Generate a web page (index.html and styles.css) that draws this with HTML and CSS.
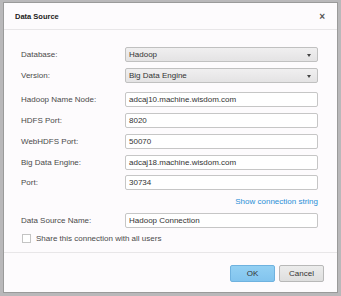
FILE: index.html
```html
<!DOCTYPE html>
<html>
<head>
    <title>Data Source</title>
    <meta charset="utf-8">
    <link rel="stylesheet" href="styles.css">
</head>
<body>
    <div class="dialog">
        <div class="header">
            <div class="title">Data Source</div>
            <div class="close">&#215;</div>
        </div>
        <div class="body">
            <div class="form">
                <label class="label">Database:</label>
                <div class="select">Hadoop<span class="arrow"></span></div>
                <label class="label">Version:</label>
                <div class="select">Big Data Engine<span class="arrow"></span></div>
            </div>
            <div class="form fields">
                <label class="label">Hadoop Name Node:</label>
                <div class="input">adcaj10.machine.wisdom.com</div>
                <label class="label">HDFS Port:</label>
                <div class="input">8020</div>
                <label class="label">WebHDFS Port:</label>
                <div class="input">50070</div>
                <label class="label">Big Data Engine:</label>
                <div class="input">adcaj18.machine.wisdom.com</div>
                <label class="label">Port:</label>
                <div class="input">30734</div>
            </div>
            <div class="link-row"><a class="link">Show connection string</a></div>
            <div class="form">
                <label class="label">Data Source Name:</label>
                <div class="input">Hadoop Connection</div>
            </div>
            <div class="check-row">
                <span class="checkbox"></span>
                <span>Share this connection with all users</span>
            </div>
        </div>
        <div class="footer">
            <button class="btn btn-ok">OK</button>
            <button class="btn">Cancel</button>
        </div>
    </div>
</body>
</html>
```

FILE: styles.css
```css
body {
    margin: 0;
    background-color: #b9b8ba;
    font-family: "Liberation Sans", Arial, sans-serif;
    font-size: 8px;
    color: #333;
}

.dialog {
    margin: 2px 0 0 3px;
    width: 333px;
    height: 289px;
    background-color: #fdfbfd;
    border: 1px solid #9a9a9a;
    display: flex;
    flex-direction: column;
}

.header {
    height: 26px;
    border-bottom: 1px solid #e8e6e8;
    display: flex;
    align-items: center;
    justify-content: space-between;
    padding: 0 12px 0 11px;
}
.title {
    font-weight: bold;
    font-size: 7.5px;
    color: #222;
}
.close {
    font-size: 10px;
    color: #555;
    font-weight: bold;
}

.body {
    flex: 1;
    padding: 17px 19px 0 17px;
}

.form {
    display: grid;
    grid-template-columns: 104px 193px;
    grid-auto-rows: 15px;
    row-gap: 5.75px;
    align-items: center;
}
.fields {
    margin-top: 9.5px;
}

.label {
    color: #4a4a4a;
}

.select, .input {
    box-sizing: border-box;
    height: 15px;
    border: 1px solid #c6c6c6;
    border-radius: 2px;
    padding: 0 3px;
    line-height: 13px;
    color: #333;
    background-color: #fff;
}
.select {
    position: relative;
    background: linear-gradient(#f0eff0, #e4e3e4);
    border-color: #c0c0c0;
}
.arrow {
    position: absolute;
    right: 6px;
    top: 6px;
    border-left: 2.5px solid transparent;
    border-right: 2.5px solid transparent;
    border-top: 3px solid #444;
}

.link-row {
    width: 297px;
    text-align: right;
    height: 23px;
    line-height: 23px;
}
.link {
    color: #2a8fd6;
}

.check-row {
    display: flex;
    align-items: center;
    margin-top: 6px;
    padding-left: 1px;
    color: #4a4a4a;
}
.checkbox {
    width: 7px;
    height: 7px;
    border: 1px solid #c4c4c4;
    background-color: #fff;
    margin-right: 5px;
}

.footer {
    box-sizing: border-box;
    height: 40px;
    border-top: 1px solid #e8e6e8;
    display: flex;
    justify-content: flex-end;
    align-items: flex-start;
    gap: 4px;
    padding: 12px 13px 0 0;
}
.btn {
    width: 45px;
    height: 17px;
    font-family: "Liberation Sans", Arial, sans-serif;
    font-size: 8px;
    color: #333;
    border: 1px solid #b8b8b8;
    border-radius: 2px;
    background: linear-gradient(#ececec, #dedede);
    padding: 0;
}
.btn-ok {
    background: linear-gradient(#93d0f3, #82c4ee);
    border-color: #6fb2df;
}
```
